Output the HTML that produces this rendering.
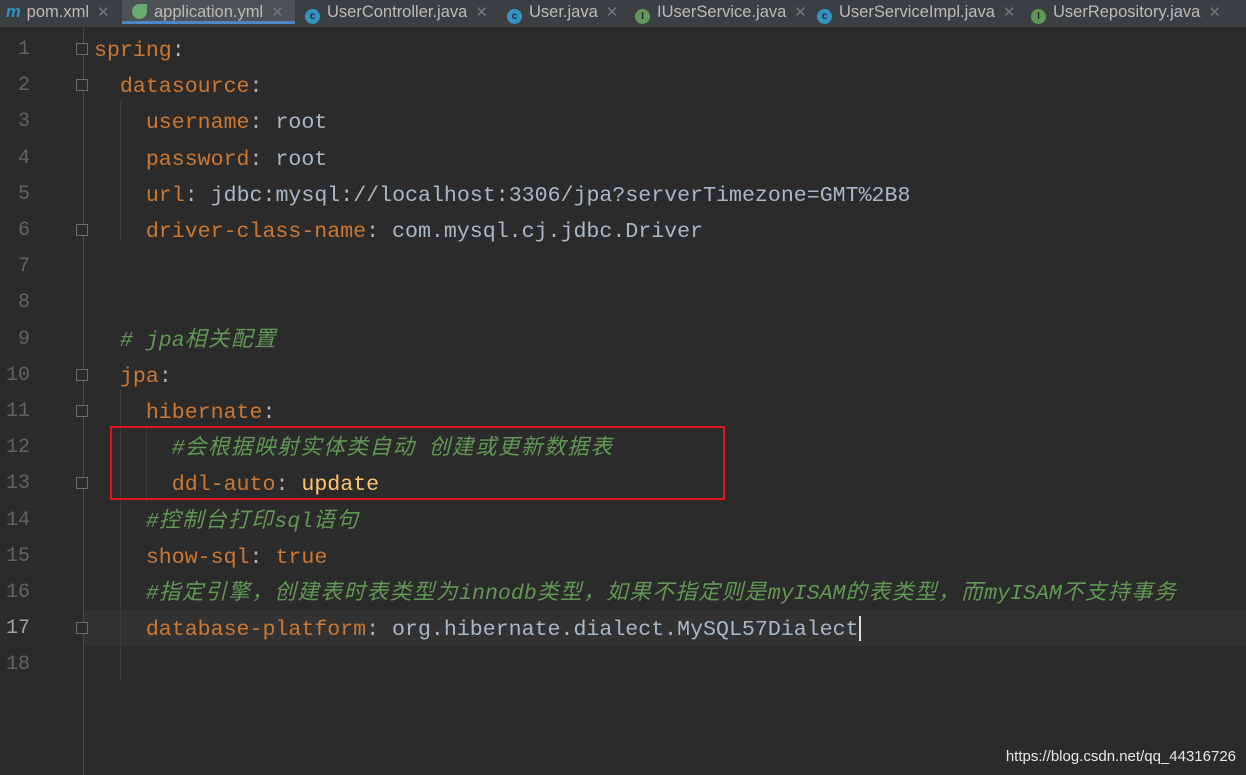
<!DOCTYPE html>
<html><head><meta charset="utf-8"><style>
body{margin:0;width:1246px;height:775px;background:#2b2b2b;overflow:hidden;position:relative;font-family:"Liberation Sans",sans-serif}
.tabs{position:absolute;left:0;top:0;width:1246px;height:27px;background:#3c3f41;color:#bbbbbb;font-size:16.5px}
.tab{position:absolute;top:0;height:27px;line-height:25px;white-space:nowrap}
.tab .x{color:#777;margin-left:8px;font-size:15px}
.ic{display:inline-block;width:15px;height:15px;border-radius:50%;color:#1f2a30;font-size:10px;line-height:15px;text-align:center;vertical-align:-2px;margin-right:7px;font-weight:bold}
.c{background:#3592c4}.i{background:#629755}
.act{border-bottom:3px solid #4a88c7;height:24px}
.ln{position:absolute;left:0;width:30px;height:36px;line-height:36px;text-align:right;color:#606366;font:20px/36px "Liberation Mono",monospace}
.code{position:absolute;left:94px;height:36px;font:21.6px/36px "Liberation Mono","Noto Sans CJK SC",monospace;white-space:pre;color:#a9b7c6}
.k{color:#cc7832}.g{color:#629755;font-style:italic}.y{color:#ffc66d}
.cj{letter-spacing:1.5px;font-size:21.6px;line-height:0}
.gl{position:absolute;left:83px;top:27px;width:1px;height:748px;background:#4a4a4a}
.fold{position:absolute;left:76px;width:12px;height:12px;border:1px solid #6c6c6c;background:#2b2b2b;box-sizing:border-box}
.ig{position:absolute;width:1px;background:#3b3b3b}
</style></head><body>
<div class="tabs">
<div class="tab" style="left:6px"><b style="color:#3592c4;font-style:italic;margin-right:6px">m</b>pom.xml<span class="x">✕</span></div>
<div class="tab act" style="left:122px;width:173px;background:#4e5254;padding-left:10px;box-sizing:border-box"><span class="ic i" style="border-radius:50% 0 50% 50%;background:#6aab73"></span>application.yml<span class="x">✕</span></div>
<div class="tab" style="left:305px"><span class="ic c">c</span>UserController.java<span class="x">✕</span></div>
<div class="tab" style="left:507px"><span class="ic c">c</span>User.java<span class="x">✕</span></div>
<div class="tab" style="left:635px"><span class="ic i">I</span>IUserService.java<span class="x">✕</span></div>
<div class="tab" style="left:817px"><span class="ic c">c</span>UserServiceImpl.java<span class="x">✕</span></div>
<div class="tab" style="left:1031px"><span class="ic i">I</span>UserRepository.java<span class="x">✕</span></div>
</div>
<div style="position:absolute;left:84px;top:610px;width:1162px;height:36px;background:#323232"></div>
<div class="gl"></div>
<div class="ig" style="left:120px;top:100px;height:140px"></div>
<div class="ig" style="left:120px;top:390px;height:290px"></div>
<div class="ig" style="left:146px;top:426px;height:76px"></div>
<div id="L"></div>
<div style="position:absolute;left:110px;top:426px;width:615px;height:74px;border:2px solid #e0161c;box-sizing:border-box"></div>
<div style="position:absolute;left:859px;top:616px;width:2px;height:25px;background:#ddd"></div>
<div style="position:absolute;right:10px;bottom:10px;color:#e8e8e8;font-size:15px">https://blog.csdn.net/qq_44316726</div>
<script>
var lines=[
'<span class="k">spring</span>:',
'  <span class="k">datasource</span>:',
'    <span class="k">username</span>: root',
'    <span class="k">password</span>: root',
'    <span class="k">url</span>: jdbc:mysql://localhost:3306/jpa?serverTimezone=GMT%2B8',
'    <span class="k">driver-class-name</span>: com.mysql.cj.jdbc.Driver',
'','',
'  <span class="g"># jpa相关配置</span>',
'  <span class="k">jpa</span>:',
'    <span class="k">hibernate</span>:',
'      <span class="g">#会根据映射实体类自动 创建或更新数据表</span>',
'      <span class="k">ddl-auto</span>: <span class="y">update</span>',
'    <span class="g">#控制台打印sql语句</span>',
'    <span class="k">show-sql</span>: <span class="k">true</span>',
'    <span class="g">#指定引擎，创建表时表类型为innodb类型，如果不指定则是myISAM的表类型，而myISAM不支持事务</span>',
'    <span class="k">database-platform</span>: org.hibernate.dialect.MySQL57Dialect',
''];
var folds=[1,2,6,10,11,13,17];
var h='';
for(var i=0;i<18;i++){var y=31+i*36.2;
var t=lines[i].replace(/([\u3000-\u9fff\uff00-\uffef]+)/g,'<span class="cj">$1</span>');
h+='<div class="ln" style="top:'+(y+1)+'px'+(i==16?';color:#a4a3a3':'')+'">'+(i+1)+'</div>';
h+='<div class="code" style="top:'+(y+2)+'px">'+t+'</div>';
if(folds.indexOf(i+1)>=0)h+='<div class="fold" style="top:'+(y+12)+'px"></div>';}
document.getElementById('L').innerHTML=h;
</script>
</body></html>
